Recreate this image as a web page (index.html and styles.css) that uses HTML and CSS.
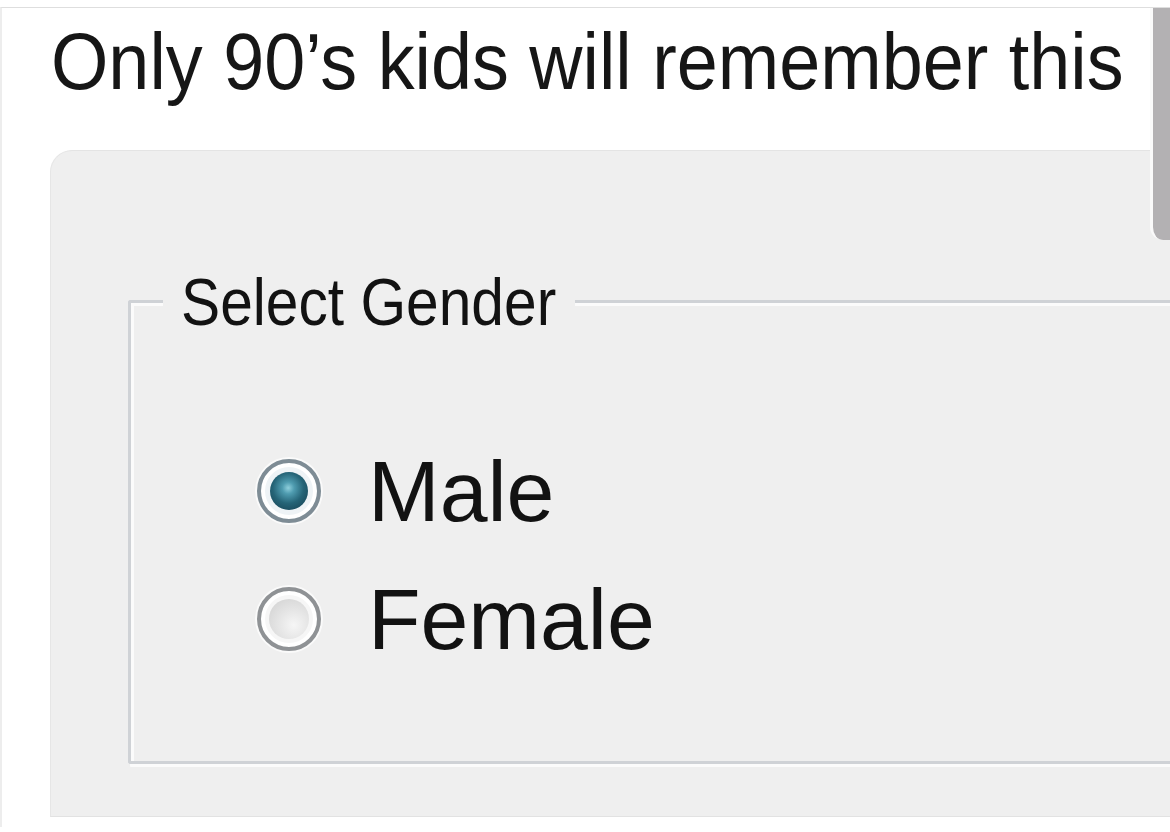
FILE: index.html
```html
<!DOCTYPE html>
<html lang="en">
<head>
<meta charset="utf-8">
<title>Only 90's kids will remember this</title>
<link rel="stylesheet" href="styles.css">
</head>
<body>
<div class="window">
  <h1 class="title">Only 90’s kids will remember this</h1>
  <div class="panel">
    <fieldset class="group">
      <legend class="group-legend"><span class="legend-text">Select Gender</span></legend>
      <div class="options">
        <label class="option">
          <span class="radio radio-checked"></span>
          <span class="option-label">Male</span>
        </label>
        <label class="option">
          <span class="radio"></span>
          <span class="option-label">Female</span>
        </label>
      </div>
    </fieldset>
  </div>
</div>
<div class="scrollbar"></div>
</body>
</html>
```
FILE: styles.css
```css
html, body {
  margin: 0;
  padding: 0;
  background: #ffffff;
  overflow: hidden;
  width: 1170px;
  height: 832px;
}

body {
  font-family: "Liberation Sans", Arial, sans-serif;
  color: #141414;
}

.window {
  margin-top: 7px;
  border-top: 1px solid #dedede;
  border-left: 2px solid #ededed;
  height: 820px;
  box-sizing: border-box;
}

.title {
  margin: 14px 0 48px 49px;
  font-size: 80px;
  line-height: 80px;
  font-weight: 400;
  white-space: nowrap;
  color: #161616;
  transform: scaleX(0.922);
  transform-origin: left center;
}

.panel {
  margin-left: 48px;
  background: #efefef;
  border-top: 1px solid #e4e4e4;
  border-left: 1px solid #e6e6e6;
  border-bottom: 1px solid #e2e2e2;
  border-top-left-radius: 22px;
  padding: 117px 0 52px 77px;
  overflow: hidden;
}

.group {
  margin: 0;
  margin-right: -60px;
  padding: 113px 0 99px 0;
  border: 3px solid #cfd2d6;
  border-right: 0;
  border-radius: 3px 0 0 3px;
  box-shadow: inset 3px 3px 0 #fbfbfb, 0 5px 0 -2px #fbfbfb;
  min-width: 0;
}

.group-legend {
  margin-left: 32px;
  padding: 0 18px;
  width: 376px;
  font-size: 67px;
  line-height: 67px;
  white-space: nowrap;
  background: #efefef;
  color: #121212;
}

.legend-text {
  display: inline-block;
  transform: scaleX(0.876);
  transform-origin: left center;
}

.options {
  display: flex;
  flex-direction: column;
  gap: 42px;
  padding-left: 126px;
}

.option {
  display: flex;
  align-items: center;
  gap: 47px;
}

.option-label {
  font-size: 86px;
  line-height: 86px;
  color: #121212;
}

.radio {
  width: 64px;
  height: 64px;
  flex: none;
  box-sizing: border-box;
  border-radius: 50%;
  border: 4px solid #8f9295;
  background: #f6f6f6;
  box-shadow: inset 0 0 0 4px #ffffff, 0 0 0 2px rgba(255, 255, 255, 0.7);
  display: flex;
  align-items: center;
  justify-content: center;
}

.radio::after {
  content: "";
  width: 40px;
  height: 40px;
  border-radius: 50%;
  background: radial-gradient(circle at 62% 65%, #f6f6f6 0%, #e4e4e4 45%, #cfcfcf 100%);
}

.radio-checked {
  border-color: #7e8c95;
  background: #eef3f6;
}

.radio-checked::after {
  width: 38px;
  height: 38px;
  background: radial-gradient(circle at 48% 42%, #8fcfdc 0%, #4f9cb0 20%, #256477 52%, #1a4a5c 82%, #153f4f 100%);
}

.scrollbar {
  position: absolute;
  top: 8px;
  right: 0;
  width: 17px;
  height: 232px;
  background: #b3b1b3;
  border-left: 3px solid #fafafa;
  border-bottom-left-radius: 13px;
}
```
